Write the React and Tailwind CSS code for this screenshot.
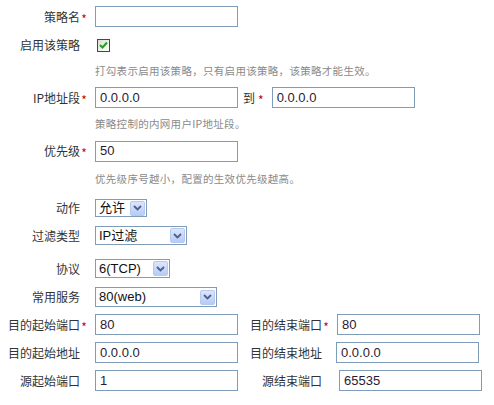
import React from "react";

const CJK = "font-['Noto_Sans_CJK_SC',sans-serif]";
const LAT = "font-['Liberation_Sans','Noto_Sans_CJK_SC',sans-serif]";

function Label({ text, req }) {
  return (
    <div className={`flex w-[88px] shrink-0 items-center justify-end text-[12px] leading-none text-[#333] ${CJK}`}>
      <span>{text}</span>
      <span className="w-[8px] translate-y-[2px] text-center text-[#c00]">{req ? "*" : ""}</span>
    </div>
  );
}

function Input({ value, className = "" }) {
  return (
    <div
      className={`flex h-[21px] w-[143px] shrink-0 items-center border border-[#7f9db9] bg-white pl-[4px] text-[13px] text-[#2a1a33] ${LAT} ${className}`}
    >
      {value}
    </div>
  );
}

function Chevron() {
  return (
    <svg width="9" height="6" viewBox="0 0 9 6">
      <path d="M1 1 L4.5 4.5 L8 1" fill="none" stroke="#4d6185" strokeWidth="1.8" />
    </svg>
  );
}

function Select({ value, w, h }) {
  return (
    <div
      className={`flex shrink-0 items-center justify-between border border-[#7f9db9] bg-white pl-[3px] pr-[1px] text-[13px] text-[#111] ${LAT} ${w} ${h}`}
    >
      <span>{value}</span>
      <div className="flex h-[15px] w-[15px] items-center justify-center rounded-[2px] border border-[#b6c9f2] bg-gradient-to-b from-[#dbe6fe] to-[#b8cbf6]">
        <Chevron />
      </div>
    </div>
  );
}

function Hint({ children, h }) {
  return (
    <div className={`flex items-center pl-[95px] text-[10.5px] leading-none tracking-[0.3px] text-[#8a8a8a] ${CJK} ${h}`}>
      {children}
    </div>
  );
}

export default function App() {
  return (
    <div className="h-[405px] w-[494px] bg-white">
      {/* 策略名 */}
      <div className="flex h-[33px] items-center">
        <Label text="策略名" req />
        <Input value="" className="ml-[7px]" />
      </div>
      {/* 启用该策略 */}
      <div className="flex h-[24px] items-center">
        <Label text="启用该策略" />
        <div className="ml-[9px] flex h-[13px] w-[13px] items-center justify-center border border-[#1c5180] bg-gradient-to-br from-[#dcdcd7] to-white">
          <svg width="9" height="8" viewBox="0 0 9 8">
            <path d="M1 4 L3.5 6.5 L8 1.5" fill="none" stroke="#21a121" strokeWidth="2" />
          </svg>
        </div>
      </div>
      <Hint h="h-[29px]">打勾表示启用该策略，只有启用该策略，该策略才能生效。</Hint>
      {/* IP地址段 */}
      <div className="flex h-[23px] items-center">
        <Label text="IP地址段" req />
        <Input value="0.0.0.0" className="ml-[7px]" />
        <span className={`ml-[5px] text-[12px] leading-none text-[#333] ${CJK}`}>到</span>
        <span className={`ml-[3px] translate-y-[2px] text-[12px] leading-none text-[#c00] ${CJK}`}>*</span>
        <Input value="0.0.0.0" className="ml-[8px]" />
      </div>
      <Hint h="h-[31px]">策略控制的内网用户IP地址段。</Hint>
      {/* 优先级 */}
      <div className="flex h-[22px] items-center">
        <Label text="优先级" req />
        <Input value="50" className="ml-[7px]" />
      </div>
      <Hint h="h-[34px]">优先级序号越小，配置的生效优先级越高。</Hint>
      {/* 动作 */}
      <div className="flex h-[24px] items-center">
        <Label text="动作" />
        <div className="ml-[7px]">
          <Select value="允许" w="w-[52px]" h="h-[18px]" />
        </div>
      </div>
      {/* 过滤类型 */}
      <div className="flex h-[31px] items-center">
        <Label text="过滤类型" />
        <div className="ml-[7px]">
          <Select value="IP过滤" w="w-[92px]" h="h-[19px]" />
        </div>
      </div>
      {/* 协议 */}
      <div className="flex h-[35px] items-center">
        <Label text="协议" />
        <div className="ml-[7px]">
          <Select value="6(TCP)" w="w-[75px]" h="h-[19px]" />
        </div>
      </div>
      {/* 常用服务 */}
      <div className="flex h-[22px] items-center">
        <Label text="常用服务" />
        <div className="ml-[7px]">
          <Select value="80(web)" w="w-[122px]" h="h-[20px]" />
        </div>
      </div>
      {/* 目的起始端口 */}
      <div className="flex h-[33px] items-center">
        <Label text="目的起始端口" req />
        <Input value="80" className="ml-[7px]" />
        <div className="ml-[4px] flex">
          <Label text="目的结束端口" req />
        </div>
        <Input value="80" className="ml-[7px]" />
      </div>
      {/* 目的起始地址 */}
      <div className="flex h-[23px] items-center">
        <Label text="目的起始地址" />
        <Input value="0.0.0.0" className="ml-[7px]" />
        <div className="ml-[4px] flex">
          <Label text="目的结束地址" />
        </div>
        <Input value="0.0.0.0" className="ml-[6px]" />
      </div>
      {/* 源起始端口 */}
      <div className="flex h-[33px] items-center">
        <Label text="源起始端口" />
        <Input value="1" className="ml-[7px]" />
        <div className="ml-[4px] flex">
          <Label text="源结束端口" />
        </div>
        <Input value="65535" className="ml-[9px]" />
      </div>
    </div>
  );
}
